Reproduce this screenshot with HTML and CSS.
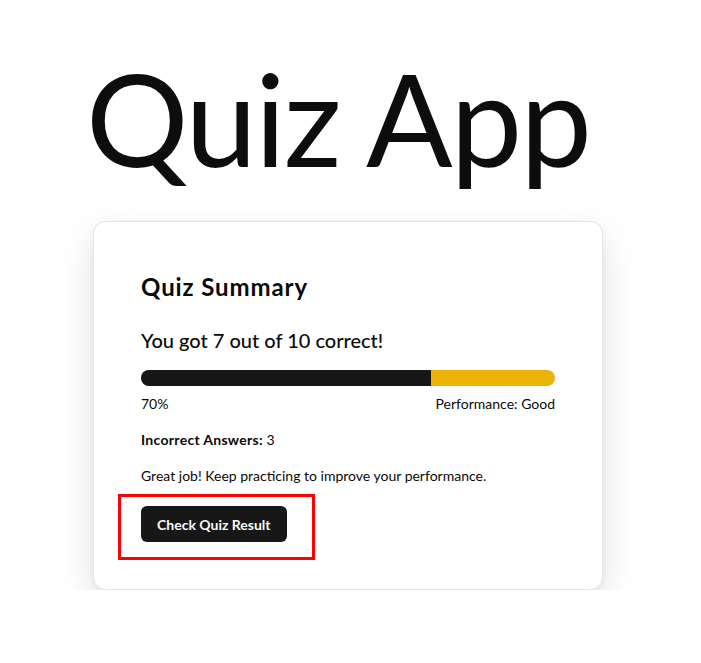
FILE: index.html
```html
<!DOCTYPE html>
<html lang="en">
<head>
<meta charset="utf-8">
<title>Quiz App</title>
<link rel="stylesheet" href="styles.css">
</head>
<body>
<main class="page">
  <h1 class="title">Quiz App</h1>
  <section class="card">
    <h2 class="card-title">Quiz Summary</h2>
    <p class="score">You got 7 out of 10 correct!</p>
    <div class="progress"><div class="progress-fill" style="width:70%"></div></div>
    <div class="progress-labels"><span>70%</span><span>Performance: Good</span></div>
    <p class="line"><strong>Incorrect Answers:</strong> 3</p>
    <p class="line message">Great job! Keep practicing to improve your performance.</p>
    <div class="action">
      <button class="btn" type="button">Check Quiz Result</button>
      <span class="highlight" aria-hidden="true"></span>
    </div>
  </section>
</main>
</body>
</html>
```
FILE: styles.css
```css
* { box-sizing: border-box; }
html, body { margin: 0; padding: 0; background: #ffffff; }
body {
  font-family: "Lato", "Noto Sans", sans-serif;
  color: #0a0a0a;
}
.page {
  display: flex;
  flex-direction: column;
  align-items: center;
  padding-top: 38px;
  padding-right: 5px;
}
.title {
  margin: 0;
  padding-right: 20px;
  font-size: 128px;
  font-weight: 400;
  line-height: 160px;
  letter-spacing: -2px;
  color: #0d0d0d;
}
.card {
  width: 510px;
  margin-top: 23px;
  padding: 47px;
  border: 1px solid #e5e5e5;
  border-radius: 13px;
  background: #fff;
  box-shadow: 0 14px 34px rgba(0,0,0,0.13), 0 2px 6px rgba(0,0,0,0.04);
}
.card-title {
  margin: 0;
  font-size: 24px;
  font-weight: 700;
  line-height: 36px;
  letter-spacing: 0.9px;
}
.score {
  margin: 21px 0 0;
  font-size: 20px;
  font-weight: 500;
  line-height: 28px;
}
.progress {
  margin-top: 16px;
  height: 16px;
  border-radius: 9999px;
  background: #eab308;
  overflow: hidden;
}
.progress-fill {
  height: 100%;
  background: #171717;
}
.progress-labels {
  display: flex;
  justify-content: space-between;
  margin-top: 8px;
  font-size: 14px;
  line-height: 20px;
}
.line {
  margin: 16px 0 0;
  font-size: 14px;
  line-height: 20px;
}
.line strong { font-weight: 700; letter-spacing: 0.3px; }
.action {
  position: relative;
  margin-top: 20px;
  display: flex;
}
.btn {
  height: 36px;
  padding: 0 16px;
  border: 0;
  border-radius: 6px;
  background: #171717;
  color: #fafafa;
  font-family: inherit;
  font-size: 14px;
  font-weight: 700;
}
.highlight {
  position: absolute;
  left: -23px;
  top: -12px;
  width: 197px;
  height: 66px;
  border: 3px solid #ff0000;
}
```
